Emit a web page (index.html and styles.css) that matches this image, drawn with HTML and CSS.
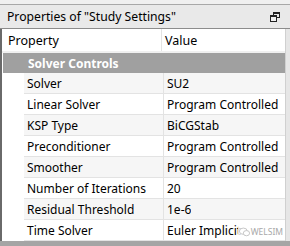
FILE: index.html
```html
<!DOCTYPE html>
<html>
<head>
<meta charset="utf-8">
<link rel="stylesheet" href="styles.css">
</head>
<body>
<div class="panel">
  <div class="topstrip"></div>
  <div class="titlebar">
    <span class="title">Properties of "Study Settings"</span>
    <svg class="restore" width="10" height="10" viewBox="0 0 10 10">
      <rect x="3.5" y="0.5" width="6" height="5" fill="none" stroke="#222"/>
      <rect x="3.5" y="0.5" width="6" height="1.5" fill="#222"/>
      <rect x="0.5" y="3.5" width="6" height="6" fill="#f0f0f0" stroke="#222"/>
      <rect x="0.5" y="3.5" width="6" height="1.5" fill="#222"/>
    </svg>
  </div>
  <div class="body">
    <div class="grid">
      <div class="head">
        <div class="hcell c1">Property</div>
        <div class="hcell c2">Value</div>
      </div>
      <div class="group">Solver Controls</div>
      <div class="row alt"><div class="cell c1">Solver</div><div class="cell c2">SU2</div></div>
      <div class="row"><div class="cell c1">Linear Solver</div><div class="cell c2">Program Controlled</div></div>
      <div class="row alt"><div class="cell c1">KSP Type</div><div class="cell c2">BiCGStab</div></div>
      <div class="row"><div class="cell c1">Preconditioner</div><div class="cell c2">Program Controlled</div></div>
      <div class="row alt"><div class="cell c1">Smoother</div><div class="cell c2">Program Controlled</div></div>
      <div class="row"><div class="cell c1">Number of Iterations</div><div class="cell c2">20</div></div>
      <div class="row alt"><div class="cell c1">Residual Threshold</div><div class="cell c2">1e-6</div></div>
      <div class="row"><div class="cell c1">Time Solver</div><div class="cell c2">Euler Implicit</div></div>
      <div class="watermark">
        <svg width="11" height="10" viewBox="0 0 14 12"><ellipse cx="5.5" cy="5" rx="5" ry="4" fill="none" stroke="#b8b8b8"/><ellipse cx="9.5" cy="7.5" rx="4" ry="3.3" fill="#fff" stroke="#b8b8b8"/></svg>
        <span>WELSIM</span>
      </div>
    </div>
    <div class="scroll"></div>
  </div>
  <div class="bottom"></div>
</div>
</body>
</html>
```
FILE: styles.css
```css
html, body {
  margin: 0;
  padding: 0;
  background: #f0f0f0;
}
.panel {
  width: 290px;
  height: 246px;
  overflow: hidden;
  font-family: "Noto Sans", "Open Sans", sans-serif;
  font-size: 12px;
  color: #000;
}
.topstrip {
  height: 4px;
  background: #f0f0f0;
  border-bottom: 1px solid #a8a8a8;
}
.titlebar {
  height: 23px;
  background: #e9e9e9;
  display: flex;
  align-items: center;
  justify-content: space-between;
  padding: 0 10px 0 7px;
  border-bottom: 1px solid #8c8c8c;
  font-size: 12.2px;
}
.restore {
  display: block;
}
.body {
  display: flex;
  height: 212px;
}
.grid {
  position: relative;
  flex: 1;
  background: #fff;
  border-left: 2px solid #6a6a6a;
}
.head {
  display: flex;
  height: 22px;
  border-bottom: 2px solid #f0f0f0;
}
.hcell {
  display: flex;
  align-items: center;
  font-size: 12.5px;
}
.head .c1 {
  width: 153px;
  padding-left: 6px;
  border-right: 1px solid #e3e3e3;
}
.head .c2 {
  padding-left: 3px;
}
.group {
  height: 20px;
  margin-left: 1px;
  background: #a0a0a0;
  color: #fff;
  font-weight: bold;
  padding-left: 25px;
  display: flex;
  align-items: center;
}
.row {
  display: flex;
  height: 21px;
  margin-left: 22px;
  border-bottom: 1px solid #e3e3e3;
  box-sizing: border-box;
}
.row.alt {
  background: #f6f6f6;
}
.cell {
  display: flex;
  align-items: center;
  white-space: nowrap;
  overflow: hidden;
}
.row .c1 {
  width: 136px;
  padding-left: 3px;
  border-right: 1px solid #e3e3e3;
}
.row .c2 {
  padding-left: 3px;
}
.watermark {
  position: absolute;
  right: 2px;
  bottom: 4px;
  display: flex;
  align-items: center;
  gap: 1px;
  color: #a8a8a8;
  font-size: 8.5px;
  background: rgba(255, 255, 255, 0.85);
  padding-left: 1px;
}
.scroll {
  width: 4px;
  background: #e6e6e6;
  border-left: 1px solid #d0d0d0;
}
.bottom {
  height: 5px;
  background: #a5a5a5;
}
```
